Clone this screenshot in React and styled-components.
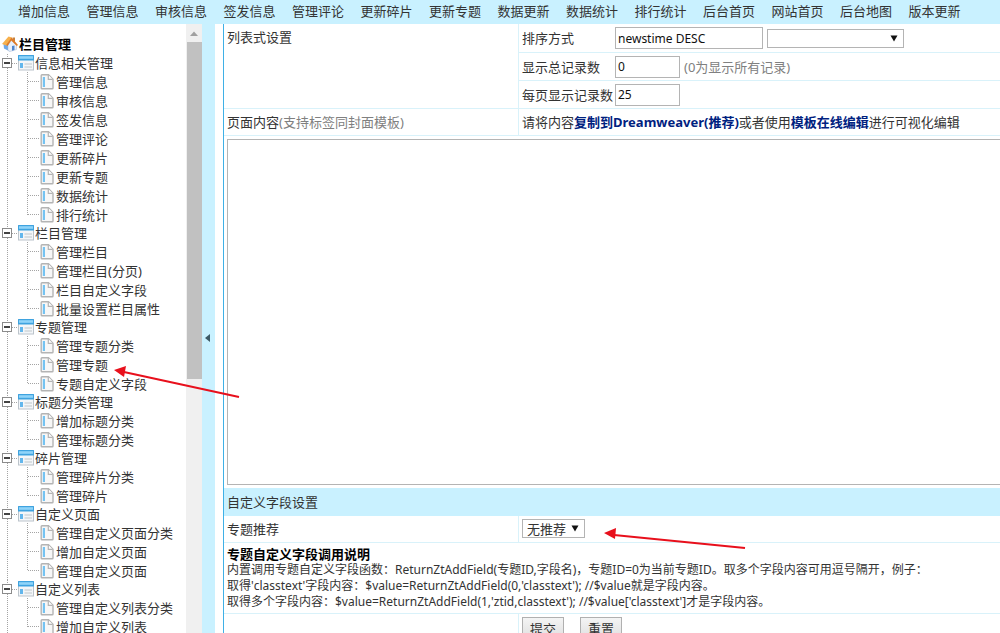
import { useState } from 'react'
import styled, { createGlobalStyle } from 'styled-components'

const GlobalStyle = createGlobalStyle`
* {
  box-sizing: border-box;
}
body {
  margin: 0;
  background: #fff;
}
body, input, select, textarea, button {
  font-family: "Noto Sans", "Noto Sans CJK SC", sans-serif;
  font-size: 13px;
  line-height: 16px;
  color: #333;
}
ul {
  list-style: none;
  margin: 0;
  padding: 0;
}
`

const dots = (dir) => `repeating-linear-gradient(${dir}, #a4a4a4 0 1px, transparent 1px 2px)`

const Page = styled.div`
position: relative;
display: flex;
flex-direction: column;
height: 100vh;
overflow: hidden;
`
const TopNav = styled.nav`
flex: none;
padding: 3px 23px 5px 18px;
background: #c9f1ff;
`
const TopList = styled.ul`
display: grid;
grid-auto-flow: column;
grid-auto-columns: 1fr;
white-space: nowrap;
`
const Link = styled.a`
color: inherit;
text-decoration: none;

&:hover {
  text-decoration: underline;
}
`
const Body = styled.div`
display: flex;
flex: 1;
min-height: 0;
`
const Sidebar = styled.aside`
flex: none;
width: 186px;
padding-top: 10px;
overflow: hidden;
white-space: nowrap;
`
const Root = styled.div`
display: flex;
align-items: center;
gap: 1px;
height: 20px;
padding-left: 2px;
font-weight: 700;
color: #000;
`
const Group = styled.li`
background: ${dots('to bottom')} 7px 0 / 1px 100% no-repeat;
`
const GroupRow = styled.div`
display: flex;
align-items: center;
height: 18px;
padding-left: 2px;
background: ${dots('to right')} 12px 9px / 5px 1px no-repeat;
`
const Toggle = styled.button`
display: flex;
align-items: center;
justify-content: center;
width: 10px;
height: 10px;
margin-right: 6px;
padding: 0;
border: 1px solid #8b8b8b;
background: #fff;
cursor: pointer;

&::before {
  content: "";
  width: 6px;
  height: 2px;
  background: #444;
}
`
const GroupLink = styled(Link)`
margin-left: 1px;
`
const Children = styled.ul`
background: ${dots('to bottom')} 27px 0 / 1px calc(100% - 9px) no-repeat;
`
const Item = styled.li`
display: flex;
align-items: center;
gap: 2px;
height: 19px;
padding-left: 40px;
background: ${dots('to right')} 28px 9px / 11px 1px no-repeat;
`
const Scrollbar = styled.div`
display: flex;
flex-direction: column;
align-items: center;
flex: none;
width: 16px;
background: #f0f0f0;
`
const ScrollUp = styled.div`
display: flex;
align-items: center;
justify-content: center;
flex: none;
height: 18px;
`
const Track = styled.div`
flex: 1;
width: 15px;
`
const Thumb = styled.div`
height: 57%;
background: #c1c1c1;
`
const Splitter = styled.div`
display: flex;
align-items: center;
flex: none;
width: 13px;
padding: 18px 0 0 3px;
background: #c9f1ff;
`
const Main = styled.main`
flex: 1;
min-width: 0;
margin-left: 8px;
border-left: 1px solid #3fb0e6;
overflow: hidden;
`
const Row = styled.div`
display: grid;
grid-template-columns: 294px 1fr;
border-bottom: 1px solid #d9f2fa;
`
const Cell = styled.div`
padding: ${({ $flush }) => ($flush ? '0' : '5px 3px')};
white-space: nowrap;

& + & {
  border-left: 1px solid #d9f2fa;
}
`
const Field = styled.div`
display: grid;
grid-template-columns: 93px 1fr;
align-items: center;
height: 28px;
padding-left: 3px;

& + & {
  border-top: 1px solid #d9f2fa;
}
`
const Controls = styled.div`
display: flex;
align-items: center;
gap: 4px;
`
const TextInput = styled.input`
width: ${({ $wide }) => ($wide ? '148px' : '65px')};
height: 22px;
padding: 0 2px;
border: 1px solid #b4b4b4;
background: #fff;
color: #111;
font-size: 12px;
`
const Hint = styled.span`
color: #808080;
`
const SelectBox = styled.span`
position: relative;
display: inline-flex;
width: ${({ $wide }) => ($wide ? '137px' : '63px')};

svg {
  position: absolute;
  top: 6px;
  right: 6px;
  pointer-events: none;
}
`
const Select = styled.select`
appearance: none;
width: 100%;
height: 19px;
padding: 0 4px;
border: 1px solid #b4b4b4;
border-radius: 0;
background: #fff;
`
const Strong = styled(Link)`
font-weight: 700;
color: #00217f;
`
const EditorRow = styled.div`
padding: 3px 0 3px 3px;
`
const Editor = styled.textarea`
display: block;
width: 100%;
height: 346px;
border: 1px solid #b4b4b4;
border-right: 0;
resize: none;
`
const Heading = styled.h2`
margin: 0;
padding: 6px 3px;
background: #c9f1ff;
font-size: 13px;
font-weight: 400;
`
const Notes = styled.div`
padding: 3px;
border-bottom: 1px solid #d9f2fa;
white-space: nowrap;
`
const NotesTitle = styled.strong`
display: block;
color: #000;
`
const Line = styled.div`
height: 16px;
font-size: 12px;
`
const Actions = styled.div`
display: flex;
gap: 16px;
padding: 3px;
`
const Button = styled.button`
width: 42px;
height: 24px;
padding: 0;
border: 1px solid #b0b0b0;
background: linear-gradient(#f4f4f4, #dedede);
`
const Marks = styled.svg`
position: absolute;
top: 0;
left: 0;
width: 100%;
height: 100%;
pointer-events: none;
`

const topLinks = [
  '增加信息', '管理信息', '审核信息', '签发信息', '管理评论', '更新碎片', '更新专题',
  '数据更新', '数据统计', '排行统计', '后台首页', '网站首页', '后台地图', '版本更新',
]

const groups = [
  { title: '信息相关管理', items: ['管理信息', '审核信息', '签发信息', '管理评论', '更新碎片', '更新专题', '数据统计', '排行统计'] },
  { title: '栏目管理', items: ['管理栏目', '管理栏目(分页)', '栏目自定义字段', '批量设置栏目属性'] },
  { title: '专题管理', items: ['管理专题分类', '管理专题', '专题自定义字段'] },
  { title: '标题分类管理', items: ['增加标题分类', '管理标题分类'] },
  { title: '碎片管理', items: ['管理碎片分类', '管理碎片'] },
  { title: '自定义页面', items: ['管理自定义页面分类', '增加自定义页面', '管理自定义页面'] },
  { title: '自定义列表', items: ['管理自定义列表分类', '增加自定义列表'] },
]

const HomeIcon = () => (
  <svg width="16" height="16" viewBox="0 0 16 16" aria-hidden="true">
    <path d="M10.500 1.500h2.500v4.500l-2.500-2z" fill="#c9823c" />
    <path d="M1.500 8L5 5l3 4v6.500L2 12.500z" fill="#6fa8e8" />
    <path d="M9.500 4.500l5 5v4L8 15.500 6 14.500V9z" fill="#e8effa" stroke="#a9b9d2" strokeWidth=".5" />
    <path d="M0 8L6.500.5l3.500 1L4.500 9.500z" fill="#f7b04c" />
    <path d="M9.500 1.500L16 9l-1.200 1L9.300 4.500 5.500 10 4.200 9z" fill="#e07b26" />
    <path d="M10 10l2.500-.5V14L10 14.800z" fill="#4f86cf" />
  </svg>
)

const FormIcon = () => (
  <svg width="16" height="16" viewBox="0 0 16 16" aria-hidden="true">
    <rect x=".5" y=".5" width="15" height="14.500" fill="#f3f6f9" stroke="#bcc4cb" />
    <rect x="0" y="0" width="16" height="5.500" rx=".5" fill="#3fa3df" />
    <rect x="1" y="1.200" width="14" height="2.600" fill="#8fd4f9" />
    <rect x="2" y="8" width="3" height="5" fill="#62b6ec" />
    <path d="M6.500 9h7.500M6.500 12h7.500" stroke="#c0c5ca" strokeWidth="1.200" />
  </svg>
)

const PageIcon = () => (
  <svg width="14" height="16" viewBox="0 0 14 16" aria-hidden="true">
    <path d="M2 .8h6.500L13 5.300V14q0 .8-.8.8H2q-.8 0-.8-.8V1.600Q1.200.8 2 .8z" fill="#f7f7f7" stroke="#b4b4b4" strokeWidth="1.400" />
    <path d="M8.300 1v4.400h4.500" fill="#fff" stroke="#b4b4b4" strokeWidth="1.200" />
    <rect x="2.800" y="3" width="2.200" height="10" fill="#74c3f2" />
  </svg>
)

const DownArrow = () => (
  <svg width="8" height="7" viewBox="0 0 8 7" aria-hidden="true">
    <path d="M.5.5h7L4 6.500z" fill="#111" />
  </svg>
)

const TreeGroup = ({ group }) => {
  const [open, setOpen] = useState(true)
  return (
    <Group>
      <GroupRow>
        <Toggle type="button" aria-label={group.title} aria-expanded={open} onClick={() => setOpen(!open)} />
        <FormIcon />
        <GroupLink href="#">{group.title}</GroupLink>
      </GroupRow>
      {open && (
        <Children>
          {group.items.map((item) => (
            <Item key={item}>
              <PageIcon />
              <Link href="#">{item}</Link>
            </Item>
          ))}
        </Children>
      )}
    </Group>
  )
}

const App = () => {
  return (
    <Page>
      <GlobalStyle />
      <TopNav>
        <TopList>
          {topLinks.map((text) => (
            <li key={text}><Link href="#">{text}</Link></li>
          ))}
        </TopList>
      </TopNav>
      <Body>
        <Sidebar>
          <Root><HomeIcon />栏目管理</Root>
          <ul>
            {groups.map((group) => <TreeGroup key={group.title} group={group} />)}
          </ul>
        </Sidebar>
        <Scrollbar>
          <ScrollUp>
            <svg width="8" height="5" viewBox="0 0 8 5" aria-hidden="true"><path d="M0 5l4-4.500L8 5z" fill="#a0a0a0" /></svg>
          </ScrollUp>
          <Track><Thumb /></Track>
        </Scrollbar>
        <Splitter>
          <svg width="5" height="8" viewBox="0 0 5 8" aria-hidden="true"><path d="M5 0v8L0 4z" fill="#3d5a66" /></svg>
        </Splitter>
        <Main>
          <Row>
            <Cell>列表式设置</Cell>
            <Cell $flush>
              <Field>
                <label htmlFor="order">排序方式</label>
                <Controls>
                  <TextInput id="order" $wide defaultValue="newstime DESC" />
                  <SelectBox $wide>
                    <Select aria-label="排序方式"><option></option></Select>
                    <DownArrow />
                  </SelectBox>
                </Controls>
              </Field>
              <Field>
                <label htmlFor="total">显示总记录数</label>
                <Controls>
                  <TextInput id="total" defaultValue="0" />
                  <Hint>(0为显示所有记录)</Hint>
                </Controls>
              </Field>
              <Field>
                <label htmlFor="perpage">每页显示记录数</label>
                <Controls>
                  <TextInput id="perpage" defaultValue="25" />
                </Controls>
              </Field>
            </Cell>
          </Row>
          <Row>
            <Cell><label htmlFor="content">页面内容</label><Hint>(支持标签同封面模板)</Hint></Cell>
            <Cell>请将内容<Strong href="#">复制到Dreamweaver(推荐)</Strong>或者使用<Strong href="#">模板在线编辑</Strong>进行可视化编辑</Cell>
          </Row>
          <EditorRow>
            <Editor id="content" />
          </EditorRow>
          <Heading>自定义字段设置</Heading>
          <Row>
            <Cell><label htmlFor="recommend">专题推荐</label></Cell>
            <Cell $flush>
              <Actions>
                <SelectBox>
                  <Select id="recommend"><option>无推荐</option></Select>
                  <DownArrow />
                </SelectBox>
              </Actions>
            </Cell>
          </Row>
          <Notes>
            <NotesTitle>专题自定义字段调用说明</NotesTitle>
            <Line>内置调用专题自定义字段函数：ReturnZtAddField(专题ID,字段名)，专题ID=0为当前专题ID。取多个字段内容可用逗号隔开，例子：</Line>
            <Line>取得'classtext'字段内容：$value=ReturnZtAddField(0,'classtext'); //$value就是字段内容。</Line>
            <Line>取得多个字段内容：$value=ReturnZtAddField(1,'ztid,classtext'); //$value['classtext']才是字段内容。</Line>
          </Notes>
          <Row>
            <Cell />
            <Cell $flush>
              <Actions>
                <Button type="submit">提交</Button>
                <Button type="reset">重置</Button>
              </Actions>
            </Cell>
          </Row>
        </Main>
      </Body>
      <Marks aria-hidden="true">
        <g stroke="#e8101c" strokeWidth="2" fill="#e8101c">
          <path d="M239 397L124 372" />
          <path d="M114 370l12-4-2 11z" stroke="none" />
          <path d="M745 548L614 535" />
          <path d="M604 533l12-5-1 11z" stroke="none" />
        </g>
      </Marks>
    </Page>
  )
}

export default App
